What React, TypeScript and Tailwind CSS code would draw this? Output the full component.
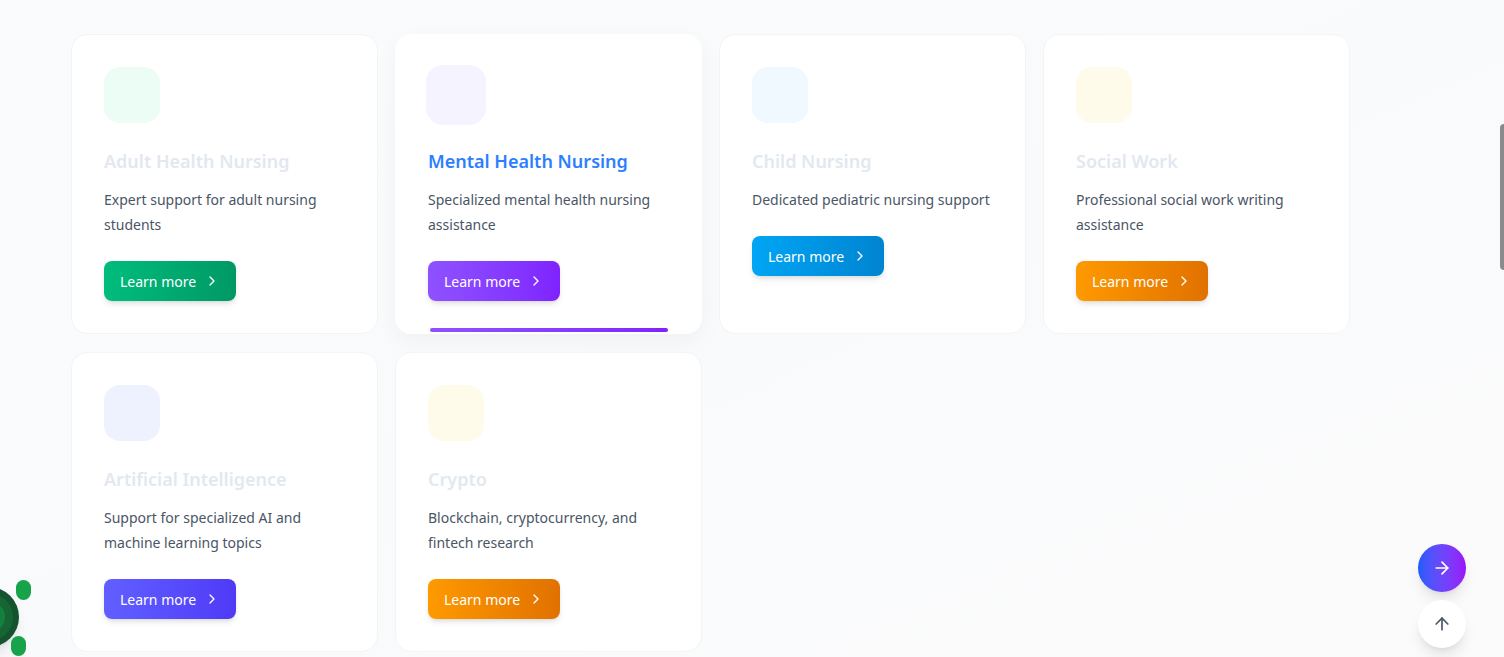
import { ChevronRight, ArrowRight, ArrowUp } from "lucide-react"

const services = [
  {
    title: "Adult Health Nursing",
    desc: "Expert support for adult nursing students",
    iconBg: "bg-emerald-50",
    btn: "from-emerald-500 to-emerald-600",
  },
  {
    title: "Mental Health Nursing",
    desc: "Specialized mental health nursing assistance",
    iconBg: "bg-violet-50",
    btn: "from-violet-500 to-violet-600",
    active: true,
  },
  {
    title: "Child Nursing",
    desc: "Dedicated pediatric nursing support",
    iconBg: "bg-sky-50",
    btn: "from-sky-500 to-sky-600",
  },
  {
    title: "Social Work",
    desc: "Professional social work writing assistance",
    iconBg: "bg-amber-50",
    btn: "from-amber-500 to-amber-600",
  },
  {
    title: "Artificial Intelligence",
    desc: "Support for specialized AI and machine learning topics",
    iconBg: "bg-indigo-50",
    btn: "from-indigo-500 to-indigo-600",
  },
  {
    title: "Crypto",
    desc: "Blockchain, cryptocurrency, and fintech research",
    iconBg: "bg-amber-50",
    btn: "from-amber-500 to-amber-600",
  },
]

function ServiceCard({ service }: { service: (typeof services)[number] }) {
  const active = !!service.active
  return (
    <div
      className={`relative flex flex-col items-start rounded-2xl border bg-white p-8 ${
        active ? "border-transparent shadow-[0_8px_24px_rgba(15,23,42,0.04)]" : "border-gray-100"
      }`}
    >
      {/* Icon tile */}
      <div className={`h-14 w-14 rounded-2xl ${service.iconBg} ${active ? "scale-[1.07]" : ""}`} />

      <h3
        className={`mt-6 text-[18px] font-semibold leading-7 ${
          active ? "text-blue-500" : "text-slate-200"
        }`}
      >
        {service.title}
      </h3>
      <p className="mt-3 text-[14px] leading-[25px] text-gray-600">{service.desc}</p>

      <button
        className={`mt-6 flex h-10 items-center gap-2 rounded-lg bg-gradient-to-r px-4 text-[14px] text-white shadow-md ${service.btn}`}
      >
        Learn more
        <ChevronRight className="h-4 w-4" strokeWidth={2} />
      </button>

      {active && (
        <div className="absolute bottom-px left-[34px] h-1 w-[238px] rounded-full bg-gradient-to-r from-violet-500 to-violet-600" />
      )}
    </div>
  )
}

export default function App() {
  return (
    <div
      className="relative h-[657px] w-full overflow-hidden bg-gradient-to-br from-[#fafbfc] via-[#f9fafb] to-[#fbfbfc]"
      style={{ fontFamily: '"Noto Sans", "Open Sans", sans-serif' }}
    >
      {/* Services grid */}
      <div className="grid grid-cols-[repeat(4,307px)] auto-rows-[minmax(300px,auto)] gap-x-[17px] gap-y-[18px] pl-[71px] pt-[34px]">
        {services.map((s) => (
          <ServiceCard key={s.title} service={s} />
        ))}
      </div>

      {/* Chat widget peeking from the left */}
      <div className="absolute left-[-41px] top-[587px] flex h-[60px] w-[60px] items-center justify-center rounded-full bg-[#14532d] shadow-lg">
        <div className="flex h-12 w-12 items-center justify-center rounded-full bg-[#166534]">
          <div className="h-8 w-8 rounded-full bg-[#15803d]" />
        </div>
      </div>
      <div className="absolute left-[16px] top-[580px] h-5 w-[15px] rounded-full bg-[#16a34a]" />
      <div className="absolute left-[11px] top-[636px] h-5 w-[15px] rounded-full bg-[#16a34a]" />

      {/* Floating actions */}
      <div className="absolute right-[38px] top-[544px] flex flex-col gap-2">
        <button className="flex h-12 w-12 items-center justify-center rounded-full bg-gradient-to-r from-blue-600 to-purple-600 text-white shadow-lg">
          <ArrowRight className="h-5 w-5" />
        </button>
        <button className="flex h-12 w-12 items-center justify-center rounded-full bg-white text-gray-600 shadow-lg">
          <ArrowUp className="h-5 w-5" />
        </button>
      </div>

      {/* Scrollbar thumb */}
      <div className="absolute right-0 top-[124px] h-[146px] w-[4px] rounded-l-full bg-[#8a8a8a]" />
    </div>
  )
}
